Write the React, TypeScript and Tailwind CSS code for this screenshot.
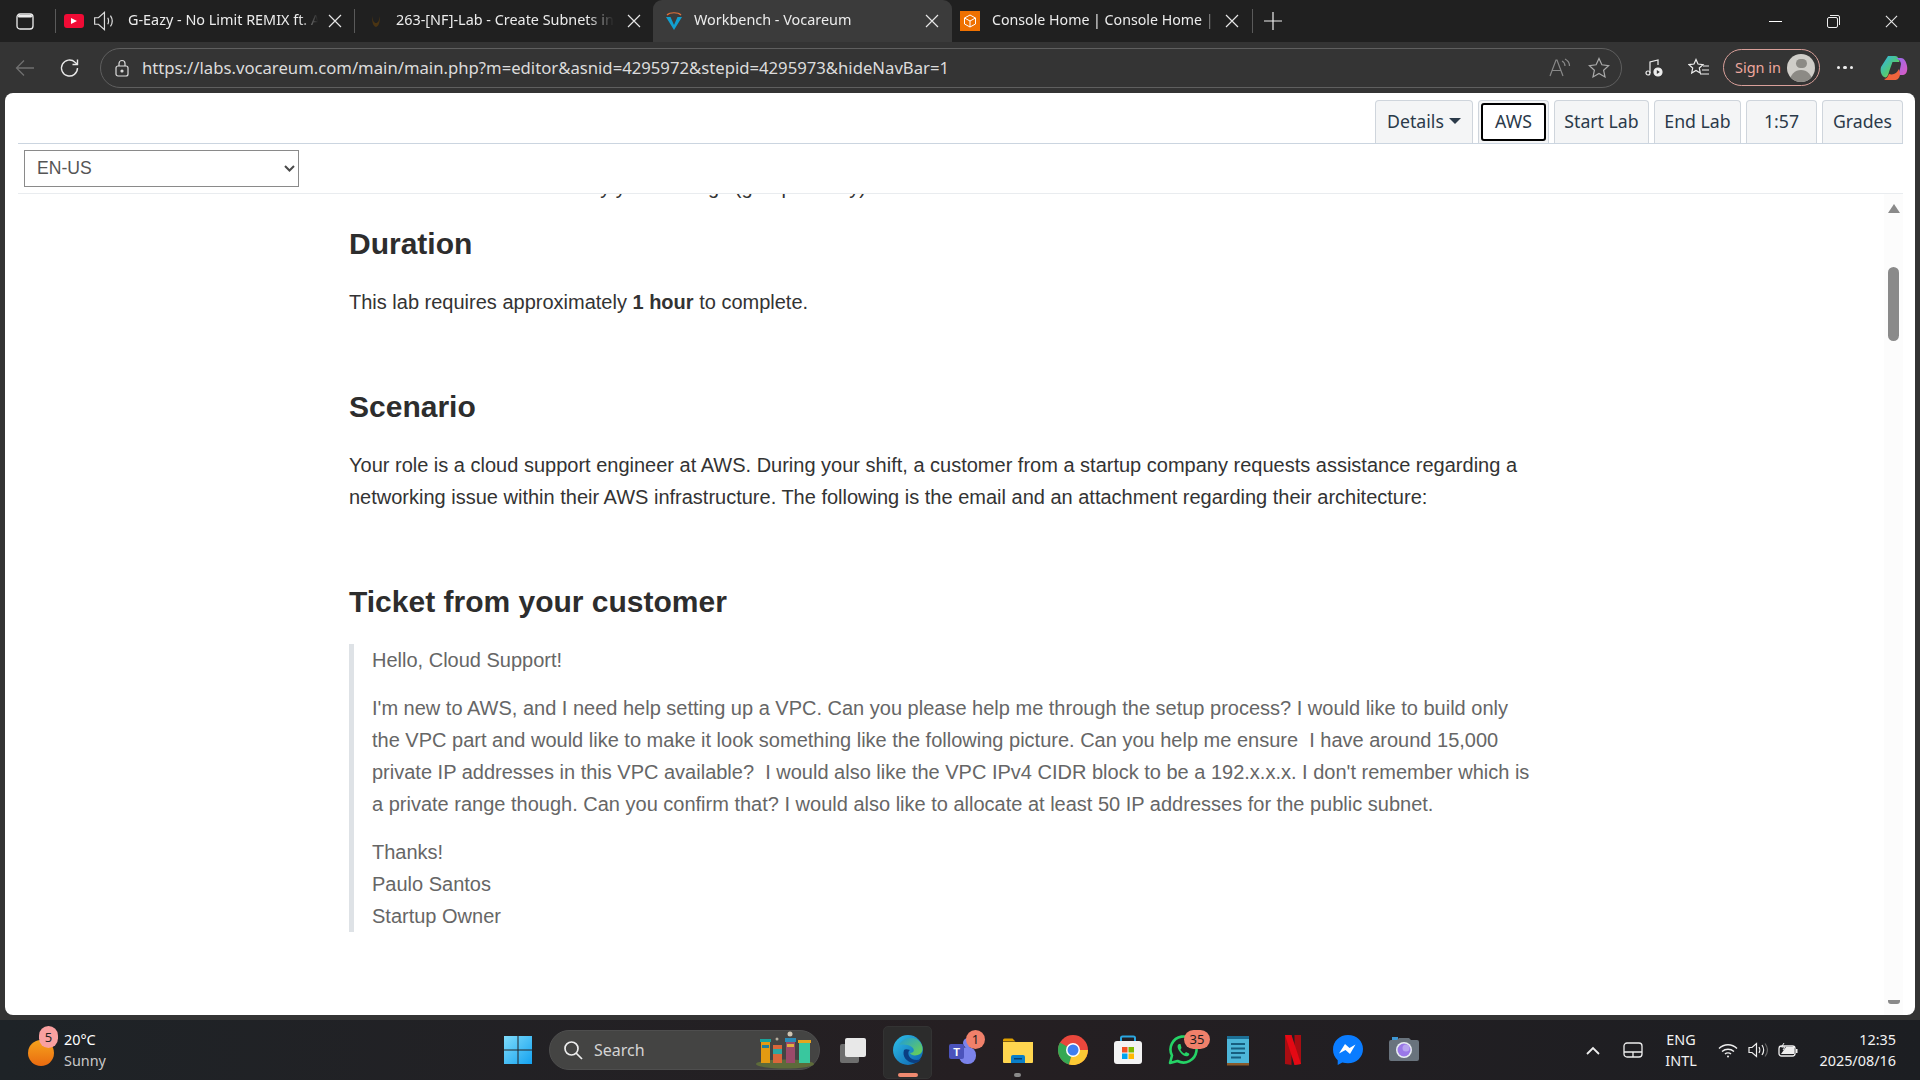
import React from "react";

const ui = "font-['Noto_Sans','Open_Sans',sans-serif]";

function X({ size = 14, color = "#e6e6e6" }: { size?: number; color?: string }) {
  return (
    <svg width={size} height={size} viewBox="0 0 14 14" fill="none" stroke={color} strokeWidth="1.200">
      <path d="M1 1l12 12M13 1L1 13" />
    </svg>
  );
}

function Tab({ icon, title, iconW, textW, active, width }: { icon?: React.ReactNode; title: string; iconW: number; textW: number; active?: boolean; width: number }) {
  return (
    <div
      className={active ? "flex items-center h-[42px] rounded-t-[9px] bg-[#3b3b3b] shrink-0" : "flex items-center h-[42px] shrink-0"}
      style={{ width }}
    >
      <div className="flex items-center justify-center shrink-0" style={{ width: iconW }}>{icon}</div>
      <div className="overflow-hidden whitespace-nowrap text-[14.4px] leading-[20px] pb-[2px] text-[#ececec] [mask-image:linear-gradient(to_right,black_88%,transparent)]" style={{ width: textW }}>{title}</div>
      <div className="flex-1 flex justify-center"><X /></div>
    </div>
  );
}

function TopBtn({ children, w, focus }: { children: React.ReactNode; w: number; focus?: boolean }) {
  return (
    <div className="relative h-[43px] shrink-0 flex items-center justify-center pb-[2px] bg-[#f4f5f6] border border-b-0 border-[#cfd5dc] rounded-t-[4px] text-[17.7px] text-[#2b3a4a]" style={{ width: w }}>
      {focus && <div className="absolute inset-[2px] border-[2px] border-black rounded-[3px] bg-white" />}
      <span className="relative flex items-center gap-[3px]">{children}</span>
    </div>
  );
}

function TaskItem({ children, badge, dot, active }: { children: React.ReactNode; badge?: string; dot?: boolean; active?: boolean }) {
  return (
    <div className="relative w-[55px] h-[60px] shrink-0 flex items-center justify-center">
      {active && <div className="absolute left-[3px] right-[3px] top-[6px] bottom-[1px] rounded-[5px] bg-[#2c2c2c] border border-[#333]" />}
      <div className="relative w-[30px] h-[30px]">{children}</div>
      {active && <div className="absolute left-[18px] w-[20px] h-[4px] bottom-[3px] rounded bg-[#f08a70]" />}
      {dot && <div className="absolute left-[24px] w-[7px] h-[4px] bottom-[3px] rounded bg-[#8a8a8a]" />}
      {badge && (
        <div className={`absolute top-[10px] ${badge.length > 1 ? "left-[29px] w-[26px]" : "left-[31px] w-[19px]"} h-[19px] rounded-full bg-[#f0806a] text-[#1c1c1c] text-[13px] leading-[19px] text-center`}>{badge}</div>
      )}
    </div>
  );
}

const Win = () => (
  <svg width="30" height="30" viewBox="0 0 30 30">
    <defs>
      <linearGradient id="w1" x1="0" y1="0" x2="1" y2="1"><stop offset="0" stopColor="#7fdcfb" /><stop offset="1" stopColor="#14a2f0" /></linearGradient>
    </defs>
    <path d="M1 1h13.500v13.500H1zM15.500 1H29v13.500H15.500zM1 15.500h13.500V29H1zM15.500 15.500H29V29H15.500z" fill="url(#w1)" />
  </svg>
);

const Edge = () => (
  <svg width="30" height="30" viewBox="0 0 30 30">
    <defs>
      <linearGradient id="e1" x1="0" y1="0" x2="1" y2="1"><stop offset="0" stopColor="#2fc1e8" /><stop offset="1" stopColor="#0c5fae" /></linearGradient>
      <linearGradient id="e2" x1="0" y1="0" x2="1" y2="1"><stop offset="0" stopColor="#1f9bd9" /><stop offset="1" stopColor="#6fd34c" /></linearGradient>
    </defs>
    <circle cx="15" cy="15" r="15" fill="url(#e1)" />
    <path d="M6 10C9 3 20 0 26 6c4 4 5 10 1 13-3 2-9 2-10-1 3 0 5-2 3-5-3-4-11-4-14-3z" fill="url(#e2)" />
    <path d="M11 15c-2 6 2 12 10 13 3 0 5-1 7-4-4 2-10 1-12-3-1-2-1-5 1-6-3-1-5-1-6 0z" fill="#0a3f82" />
  </svg>
);

const Teams = () => (
  <svg width="30" height="30" viewBox="0 0 30 30">
    <circle cx="20" cy="8" r="5" fill="#7b83eb" />
    <rect x="11" y="12" width="17" height="17" rx="8" fill="#7b83eb" />
    <circle cx="26" cy="10" r="3" fill="#5059c9" />
    <rect x="1" y="9" width="15" height="15" rx="2" fill="#4b53bc" />
    <text x="8.500" y="21" textAnchor="middle" fontSize="11" fontWeight="700" fill="#fff" fontFamily="Liberation Sans">T</text>
  </svg>
);

const Folder = () => (
  <svg width="30" height="30" viewBox="0 0 30 30">
    <path d="M0 5a1.500 1.500 0 0 1 1.500-1.500h8l3 3H0z" fill="#e0a100" />
    <path d="M0 7h30v20a1 1 0 0 1-1 1H1a1 1 0 0 1-1-1z" fill="#ffd64f" />
    <path d="M8 28v-6a2 2 0 0 1 2-2h10a2 2 0 0 1 2 2v6z" fill="#0a7fc9" />
    <rect x="11" y="23" width="8" height="1.500" fill="#063f70" />
  </svg>
);

const Chrome = () => (
  <svg width="30" height="30" viewBox="0 0 30 30">
    <circle cx="15" cy="15" r="15" fill="#e9473c" />
    <path d="M15 15L2 7.500A15 15 0 0 0 11 29.500z" fill="#35a853" />
    <path d="M15 15h15A15 15 0 0 1 11 29.500z" fill="#fcc934" />
    <circle cx="15" cy="15" r="7" fill="#fff" />
    <circle cx="15" cy="15" r="5.500" fill="#3f7ef0" />
  </svg>
);

const Store = () => (
  <svg width="30" height="30" viewBox="0 0 30 30">
    <path d="M8 7V3a1.500 1.500 0 0 1 1.500-1.500h11A1.500 1.500 0 0 1 22 3v4" fill="none" stroke="#2aa6e0" strokeWidth="2" />
    <rect x="1" y="6" width="28" height="23" rx="3" fill="#f3f3f3" />
    <rect x="9" y="12" width="5.500" height="5.500" fill="#f25022" />
    <rect x="15.500" y="12" width="5.500" height="5.500" fill="#7fba00" />
    <rect x="9" y="18.500" width="5.500" height="5.500" fill="#00a4ef" />
    <rect x="15.500" y="18.500" width="5.500" height="5.500" fill="#ffb900" />
  </svg>
);

const WhatsApp = () => (
  <svg width="30" height="30" viewBox="0 0 30 30" fill="none">
    <path d="M2 28l2-7.500A13 13 0 1 1 9.500 26z" stroke="#25d366" strokeWidth="2.600" strokeLinejoin="round" />
    <path d="M11 9c-2 1-2 4 1 8s6 5 8 4c1.500-1 1.500-2 1-2.500l-3-1.500-1.500 1.500c-1.500-.5-3.500-2.500-4-4l1-1.500L12.500 9z" fill="#25d366" />
  </svg>
);

const Notepad = () => (
  <svg width="30" height="32" viewBox="0 0 30 32">
    <rect x="4" y="2" width="22" height="28" fill="#4db6d9" />
    <rect x="4" y="28" width="22" height="2.500" fill="#8a5a2b" />
    <rect x="4" y="1" width="22" height="3" fill="#1c6f95" />
    <path d="M8 9h14M8 13.500h14M8 18h14M8 22.500h10" stroke="#175e80" strokeWidth="2" />
  </svg>
);

const Netflix = () => (
  <svg width="30" height="30" viewBox="0 0 30 30">
    <path d="M7 0h6.500v30L7 29z" fill="#a80d12" />
    <path d="M16.500 0H23v29l-6.500 1z" fill="#a80d12" />
    <path d="M7 0h6.500L23 29l-6.500 1z" fill="#e50914" />
  </svg>
);

const Messenger = () => (
  <svg width="30" height="30" viewBox="0 0 30 30">
    <path d="M15 0C6.500 0 0 6.200 0 14.500c0 4.400 1.800 8.100 4.700 10.700V30l4.600-2.500c1.800.5 3.700.8 5.700.8 8.500 0 15-6.200 15-14.300S23.500 0 15 0z" fill="#0a7cff" />
    <path d="M6 18.500l6-9.500 4.500 4 6-3.500L17 19l-4.500-4z" fill="#fff" />
  </svg>
);

const Camera = () => (
  <svg width="32" height="30" viewBox="0 0 32 30">
    <rect x="4" y="2" width="6" height="3" fill="#3d97d3" />
    <path d="M3 5h6l2-2h10l2 2h6a2 2 0 0 1 2 2v17a2 2 0 0 1-2 2H3a2 2 0 0 1-2-2V7a2 2 0 0 1 2-2z" fill="#69737d" />
    <circle cx="16" cy="15" r="8" fill="#e8eef2" />
    <circle cx="16" cy="15" r="6.500" fill="#9a78e8" />
    <circle cx="18" cy="13" r="3.500" fill="#b7a4f0" />
  </svg>
);

const TaskView = () => (
  <svg width="30" height="30" viewBox="0 0 30 30">
    <rect x="2" y="9" width="19" height="19" rx="2" fill="#6e6e6e" />
    <rect x="7" y="3" width="21" height="19" rx="2" fill="#e8e8e8" />
  </svg>
);

const Hives = () => (
  <svg width="60" height="38" viewBox="0 0 60 38">
    <ellipse cx="30" cy="33" rx="29" ry="4.500" fill="#5d6b3a" />
    <rect x="6" y="10" width="9" height="22" fill="#e39a12" /><rect x="5" y="8" width="11" height="3" fill="#1aa39a" /><rect x="7" y="14" width="7" height="3" fill="#1f7f9a" />
    <rect x="18" y="14" width="9" height="18" fill="#d9673a" /><rect x="18" y="18" width="9" height="5" fill="#2ea6a0" />
    <rect x="31" y="10" width="9" height="22" fill="#9a4a6a" /><rect x="30" y="7" width="11" height="4" fill="#2b8cb8" /><rect x="32" y="13" width="7" height="3" fill="#e0b040" />
    <rect x="44" y="12" width="11" height="20" fill="#39c79e" /><rect x="43" y="9" width="13" height="3" fill="#e6a51f" />
    <circle cx="35" cy="3" r="2.500" fill="#cfc6b5" /><circle cx="22" cy="8" r="1.500" fill="#b5ad9c" />
  </svg>
);

function SectionHeading({ children, mt }: { children: React.ReactNode; mt: number }) {
  return <h2 className="text-[30px] leading-[38px] font-bold text-[#2d2d2d]" style={{ marginTop: mt }}>{children}</h2>;
}

export default function App() {
  return (
    <div className={`${ui} w-[1920px] h-[1080px] overflow-hidden flex flex-col bg-[#343434]`}>
      {/* tab strip */}
      <div className="h-[42px] shrink-0 flex items-center bg-[#202020] text-white">
        <div className="w-[50px] flex justify-center">
          <svg width="18" height="18" viewBox="0 0 18 18" fill="none" stroke="#eee" strokeWidth="1.300">
            <rect x="1" y="2" width="16" height="15" rx="3" /><rect x="2" y="3" width="14" height="2.500" fill="#eee" stroke="none" rx="1" />
          </svg>
        </div>
        <div className="ml-[5px] w-px h-[24px] bg-[#5a5a5a]" />
        <div className="w-[298px] flex items-center h-[42px] shrink-0">
          <div className="ml-[8px] w-[20px] h-[14px] rounded-[3px] bg-[#f00b35] flex items-center justify-center">
            <div className="w-0 h-0 border-y-[3.500px] border-y-transparent border-l-[6px] border-l-white" />
          </div>
          <svg className="ml-[9px]" width="24" height="24" viewBox="0 0 22 22" fill="none" stroke="#ddd" strokeWidth="1.100">
            <path d="M1.500 8v6h3.500l5.500 5V3L5 8zM13.500 8c1 1.500 1 4.500 0 6M16 6c2 3 2 7 0 10" />
          </svg>
          <div className="ml-[11px] w-[190px] overflow-hidden whitespace-nowrap text-[14.4px] leading-[20px] pb-[2px] text-[#ececec] [mask-image:linear-gradient(to_right,black_90%,transparent)]">G-Eazy - No Limit REMIX ft. A$AP Rocky</div>
          <div className="ml-[10px]"><X /></div>
        </div>
        <div className="w-px h-[24px] bg-[#5a5a5a]" />
        <Tab width={298} iconW={41} textW={218} title="263-[NF]-Lab - Create Subnets in a VPC" icon={
          <svg width="14" height="14" viewBox="0 0 14 14"><path d="M3 2c0 6 1 10 4 11 3-1 4-5 4-11-1 5-2 7-4 7S4 7 3 2z" fill="#4a3413" /></svg>
        } />
        <Tab active width={299} iconW={41} textW={218} title="Workbench - Vocareum" icon={
          <svg width="20" height="20" viewBox="0 0 20 20" fill="none">
            <path d="M3 4C6 1 14 1 17 4" stroke="#e0703a" strokeWidth="1.200" />
            <path d="M2 6h4.500l3.500 8 3.500-8H18l-8 13z" fill="#12a0d0" />
          </svg>
        } />
        <div className="flex items-center h-[42px] shrink-0">
          <div className="ml-[8px] w-[20px] h-[20px] bg-[#ef7100] flex items-center justify-center">
            <svg width="14" height="14" viewBox="0 0 14 14" fill="none" stroke="#fff" strokeWidth="1"><path d="M7 1l5.500 3v6L7 13l-5.500-3V4zM1.500 4L7 7l5.500-3M7 7v6" /></svg>
          </div>
          <div className="ml-[12px] w-[226px] overflow-hidden whitespace-nowrap text-[14.2px] leading-[20px] pb-[2px] text-[#ececec] [mask-image:linear-gradient(to_right,black_92%,transparent)]">Console Home | Console Home | us-east-1</div>
          <div className="ml-[7px]"><X /></div>
          <div className="ml-[13px] w-px h-[24px] bg-[#5a5a5a]" />
        </div>
        <svg className="ml-[11px]" width="18" height="18" viewBox="0 0 18 18" stroke="#eee" strokeWidth="1.200"><path d="M9 0v18M0 9h18" /></svg>
        <div className="ml-auto flex items-center">
          <div className="w-[58px] flex justify-center"><div className="w-[13px] h-px bg-white" /></div>
          <div className="w-[58px] flex justify-center">
            <svg width="13" height="13" viewBox="0 0 13 13" fill="none" stroke="#eee" strokeWidth="1"><rect x=".5" y="2.500" width="10" height="10" rx="1.500" /><path d="M3 .5h8a1.500 1.500 0 0 1 1.500 1.500v8" /></svg>
          </div>
          <div className="w-[58px] flex justify-center"><X size={13} /></div>
        </div>
      </div>

      {/* toolbar */}
      <div className="h-[51px] shrink-0 flex items-center bg-[#343434]">
        <div className="w-[50px] flex justify-center">
          <svg width="20" height="18" viewBox="0 0 20 18" fill="none" stroke="#6f6f6f" strokeWidth="1.300"><path d="M19 9H1.500M9 1.500L1.500 9 9 16.500" /></svg>
        </div>
        <div className="w-[40px] flex justify-center">
          <svg width="22" height="22" viewBox="0 0 22 22" fill="none" stroke="#e8e8e8" strokeWidth="1.400"><path d="M18.500 11a8 8 0 1 1-2.500-5.800L18 7" /><path d="M18.500 2.500V7.500h-5" /></svg>
        </div>
        <div className="ml-[10px] w-[1522px] h-[40px] rounded-full border border-[#5f5f5f] flex items-center">
          <div className="w-[41px] flex justify-center">
            <svg width="16" height="18" viewBox="0 0 16 18" fill="none" stroke="#ddd" strokeWidth="1.200"><rect x="2" y="7" width="12" height="10" rx="2" /><path d="M5 7V4.500a3 3 0 0 1 6 0V7" /><circle cx="8" cy="12" r="1" fill="#ddd" /></svg>
          </div>
          <span className="pt-[1px] text-[16.7px] text-[#dcdcdc] whitespace-nowrap">https://labs.vocareum.com/main/main.php?m=editor&amp;asnid=4295972&amp;stepid=4295973&amp;hideNavBar=1</span>
          <div className="ml-auto flex items-center">
            <svg width="22" height="20" viewBox="0 0 22 20" fill="none" stroke="#888" strokeWidth="1.200"><path d="M1 18L7 2h1l6 16M3.500 12.500h9" /><path d="M13 3c2 1 3 3 3 5M16 1c3 1.500 4.500 4 4.500 7" /></svg>
            <svg className="ml-[17px] mr-[11px]" width="22" height="21" viewBox="0 0 22 21" fill="none" stroke="#aaa" strokeWidth="1.200"><path d="M11 1.500l2.900 6.300 6.700.8-5 4.600 1.400 6.700L11 16.500l-6 3.400 1.400-6.700-5-4.600 6.700-.8z" /></svg>
          </div>
        </div>
        <div className="ml-[12px] w-[40px] flex justify-center">
          <svg width="18" height="18" viewBox="0 0 18 18" fill="none" stroke="#eee" strokeWidth="1.200"><path d="M5 14V3l8-2v5" /><circle cx="3" cy="14" r="2" /><circle cx="13" cy="13" r="4" fill="#eee" /><path d="M11.800 11v4l3-2z" fill="#333" stroke="none" /></svg>
        </div>
        <div className="w-[49px] flex justify-center">
          <svg width="22" height="20" viewBox="0 0 22 20" fill="none" stroke="#eee" strokeWidth="1.200"><path d="M8 1.500l2 4.500 5 .6-3.700 3.400 1 5L8 12.500 3.700 15l1-5L1 6.600 6 6z" /><path d="M15 8h6M14 12h7M12 16h9" /></svg>
        </div>
        <div className="w-[97px] h-[37px] rounded-full border border-[#d9a09a] flex items-center shrink-0">
          <span className="ml-[11px] text-[14.5px] text-[#efa89f]">Sign in</span>
          <div className="ml-auto mr-[4px] w-[28px] h-[28px] rounded-full bg-[#cfcdc8] overflow-hidden flex flex-col items-center">
            <div className="mt-[5px] w-[11px] h-[11px] rounded-full bg-[#8c8a85]" />
            <div className="mt-[2px] w-[22px] h-[14px] rounded-t-full bg-[#8c8a85]" />
          </div>
        </div>
        <div className="w-[50px] flex justify-center gap-[3px]">
          <div className="w-[3.500px] h-[3.500px] rounded-full bg-[#eee]" /><div className="w-[3.500px] h-[3.500px] rounded-full bg-[#eee]" /><div className="w-[3.500px] h-[3.500px] rounded-full bg-[#eee]" />
        </div>
        <div className="w-[48px] flex justify-center">
          <svg width="28" height="26" viewBox="0 0 28 26">
            <defs>
              <linearGradient id="c1" x1="0" y1="0" x2="1" y2="1"><stop offset="0" stopColor="#2fb4f0" /><stop offset=".55" stopColor="#50c878" /><stop offset="1" stopColor="#e8d23a" /></linearGradient>
              <linearGradient id="c2" x1="0" y1="0" x2="1" y2="1"><stop offset="0" stopColor="#8e6cf0" /><stop offset="1" stopColor="#e05ac0" /></linearGradient>
            </defs>
            <path d="M8 1h7c2 0 3 1 3.500 3l1 3h-7L10 14l-2 6c-1 2-2 3-4 2C1 20 0 16 1 12z" fill="url(#c1)" />
            <path d="M16 3h5c3 0 5 3 6 8 1 5-1 9-4 9h-5l2-6 1-5c0-3-3-5-5-6z" fill="url(#c2)" />
            <path d="M9 19c3 1 6 0 8-2l2-3 1 6c-1 4-3 5-5 5H7c-1 0-2 0-3-1 2 0 4-2 5-5z" fill="#f0643c" />
          </svg>
        </div>
      </div>

      {/* page */}
      <div className="mx-[5px] h-[922px] shrink-0 rounded-[8px] bg-white overflow-hidden flex flex-col font-['Liberation_Sans',sans-serif]">
        <div className="mx-[13px] mr-[12px] h-[51px] shrink-0 flex items-end justify-end gap-[5px] border-b border-[#cbd5e0] font-['Noto_Sans',sans-serif]">
          <TopBtn w={98}>Details<span className="w-0 h-0 ml-[2px] border-x-[6px] border-x-transparent border-t-[6px] border-t-[#2b3a4a]" /></TopBtn>
          <TopBtn w={71} focus>AWS</TopBtn>
          <TopBtn w={95}>Start Lab</TopBtn>
          <TopBtn w={87}>End Lab</TopBtn>
          <TopBtn w={71}>1:57</TopBtn>
          <TopBtn w={81}>Grades</TopBtn>
        </div>
        <div className="mx-[13px] mr-[12px] h-[50px] shrink-0 border-b border-[#e9ecef] pt-[6px] pl-[6px]">
          <div className="relative w-[275px]">
            <select defaultValue="EN-US" className="block appearance-none w-[275px] h-[37px] pl-[12px] bg-white border border-[#8a8a8a] text-[17.6px] text-[#555] font-['Liberation_Sans',sans-serif]">
              <option>EN-US</option>
            </select>
            <svg className="absolute right-[4px] top-[15px] pointer-events-none" width="11" height="7" viewBox="0 0 11 7" fill="none" stroke="#4a4a4a" strokeWidth="2"><path d="M1 1l4.500 4.500L10 1" /></svg>
          </div>
        </div>
        <div className="flex flex-1 min-h-0">
          <div className="flex-1 min-w-0 overflow-hidden pl-[344px]">
            <p className="mt-[-23px] h-[32px] text-[20px] leading-[32px] text-[#333] whitespace-nowrap pl-[50px]">Communicate and relay your findings (group activity)</p>
            <SectionHeading mt={22}>Duration</SectionHeading>
            <p className="mt-[23px] text-[20px] leading-[32px] text-[#333]">This lab requires approximately <b>1 hour</b> to complete.</p>
            <SectionHeading mt={70}>Scenario</SectionHeading>
            <p className="mt-[23px] w-[1200px] text-[20px] leading-[32px] text-[#333]">Your role is a cloud support engineer at AWS. During your shift, a customer from a startup company requests assistance regarding a networking issue within their AWS infrastructure. The following is the email and an attachment regarding their architecture:</p>
            <SectionHeading mt={70}>Ticket from your customer</SectionHeading>
            <div className="mt-[23px] w-[1190px] border-l-[5px] border-[#dee2e6] pl-[18px] text-[20px] leading-[32px] text-[#666]">
              <p>Hello, Cloud Support!</p>
              <p className="mt-[16px]">I'm new to AWS, and I need help setting up a VPC. Can you please help me through the setup process? I would like to build only the VPC part and would like to make it look something like the following picture. Can you help me ensure&nbsp; I have around 15,000 private IP addresses in this VPC available?&nbsp; I would also like the VPC IPv4 CIDR block to be a 192.x.x.x. I don't remember which is a private range though. Can you confirm that? I would also like to allocate at least 50 IP addresses for the public subnet.</p>
              <p className="mt-[16px]">Thanks!<br />Paulo Santos<br />Startup Owner</p>
            </div>
          </div>
          <div className="mr-[12px] w-[19px] shrink-0 bg-[#fcfcfc] flex flex-col items-center">
            <div className="mt-[10px] w-0 h-0 border-x-[6px] border-x-transparent border-b-[9px] border-b-[#8a8a8a]" />
            <div className="mt-[54px] w-[11px] h-[74px] rounded-full bg-[#8a8a8a]" />
            <div className="mt-auto mb-[11px] w-[12px] h-[4px] rounded-b-[3px] bg-[#8a8a8a]" />
          </div>
        </div>
      </div>

      {/* taskbar */}
      <div className="mt-[5px] h-[60px] shrink-0 flex items-center bg-gradient-to-r from-[#1e2327] via-[#251f22] to-[#1c1e22]">
        <div className="w-[490px] shrink-0 flex items-center">
          <div className="relative ml-[28px] w-[26px] h-[26px] mt-[6px] rounded-full bg-gradient-to-b from-[#f5a31c] to-[#ea6a10]">
            <div className="absolute left-[11px] top-[-14px] w-[19px] h-[22px] rounded-full bg-[#f9a0a0] text-[#222] text-[13px] leading-[22px] text-center">5</div>
          </div>
          <div className="ml-[10px] pb-[1px] text-[14.4px] leading-[21px]">
            <div className="text-white">20°C</div>
            <div className="text-[#c9c9c9]">Sunny</div>
          </div>
        </div>
        <TaskItem><Win /></TaskItem>
        <div className="ml-[4px] w-[271px] h-[40px] rounded-full bg-[#444443] border border-[#4e4e4e] flex items-center shrink-0">
          <svg className="ml-[13px]" width="20" height="20" viewBox="0 0 20 20" fill="none" stroke="#eee" strokeWidth="1.700"><circle cx="8.500" cy="8.500" r="6.500" /><path d="M13 13l6 6" /></svg>
          <span className="ml-[11px] text-[16px] text-[#d4d4d4]">Search</span>
          <div className="ml-auto mr-[4px]"><Hives /></div>
        </div>
        <div className="ml-[5px]" />
        <TaskItem><TaskView /></TaskItem>
        <TaskItem active><Edge /></TaskItem>
        <TaskItem badge="1"><Teams /></TaskItem>
        <TaskItem dot><Folder /></TaskItem>
        <TaskItem><Chrome /></TaskItem>
        <TaskItem><Store /></TaskItem>
        <TaskItem badge="35"><WhatsApp /></TaskItem>
        <TaskItem><Notepad /></TaskItem>
        <TaskItem><Netflix /></TaskItem>
        <TaskItem><Messenger /></TaskItem>
        <TaskItem><Camera /></TaskItem>
        <div className="ml-auto flex items-center text-[#f2f2f2] text-[14.4px] leading-[21px]">
          <div className="w-[40px] flex justify-center">
            <svg width="14" height="9" viewBox="0 0 14 9" fill="none" stroke="#eee" strokeWidth="1.800"><path d="M1 8l6-6 6 6" /></svg>
          </div>
          <div className="w-[40px] flex justify-center">
            <svg width="20" height="16" viewBox="0 0 20 16" fill="none" stroke="#eee" strokeWidth="1.300"><rect x="1" y="1" width="18" height="14" rx="3" /><path d="M1 10h18M10 10v5" /></svg>
          </div>
          <div className="w-[56px] text-center"><div>ENG</div><div>INTL</div></div>
          <div className="w-[38px] flex justify-center">
            <svg width="20" height="15" viewBox="0 0 20 15" fill="none" stroke="#eee" strokeWidth="1.400"><path d="M1 5.500c5-5 13-5 18 0M4 8.500c3.500-3 8.500-3 12 0M7 11c1.500-1.500 4.500-1.500 6 0" /><circle cx="10" cy="13.500" r="1" fill="#eee" stroke="none" /></svg>
          </div>
          <div className="w-[22px] flex justify-center">
            <svg width="20" height="16" viewBox="0 0 20 16" fill="none" stroke="#eee" strokeWidth="1.200"><path d="M1 5.500v5h3l4.500 4v-13L4 5.500zM11 5c1 1.500 1 4.500 0 6M14 3c2 3 2 7 0 10" /><path d="M17 1.500c3 4 3 9 0 13" stroke="#666" /></svg>
          </div>
          <div className="w-[38px] flex justify-center">
            <svg width="20" height="16" viewBox="0 0 20 16" fill="none" stroke="#eee" strokeWidth="1.300"><rect x="1" y="4" width="16" height="10" rx="2.500" /><path d="M3 12l5-7h8v7z" fill="#eee" stroke="none" /><rect x="18" y="7" width="1.500" height="4" fill="#eee" stroke="none" /><path d="M6 1L3.500 5H7L5 8" strokeWidth="1" /></svg>
          </div>
          <div className="w-[89px] mr-[24px] text-right whitespace-nowrap"><div>12:35</div><div>2025/08/16</div></div>
        </div>
      </div>
    </div>
  );
}
